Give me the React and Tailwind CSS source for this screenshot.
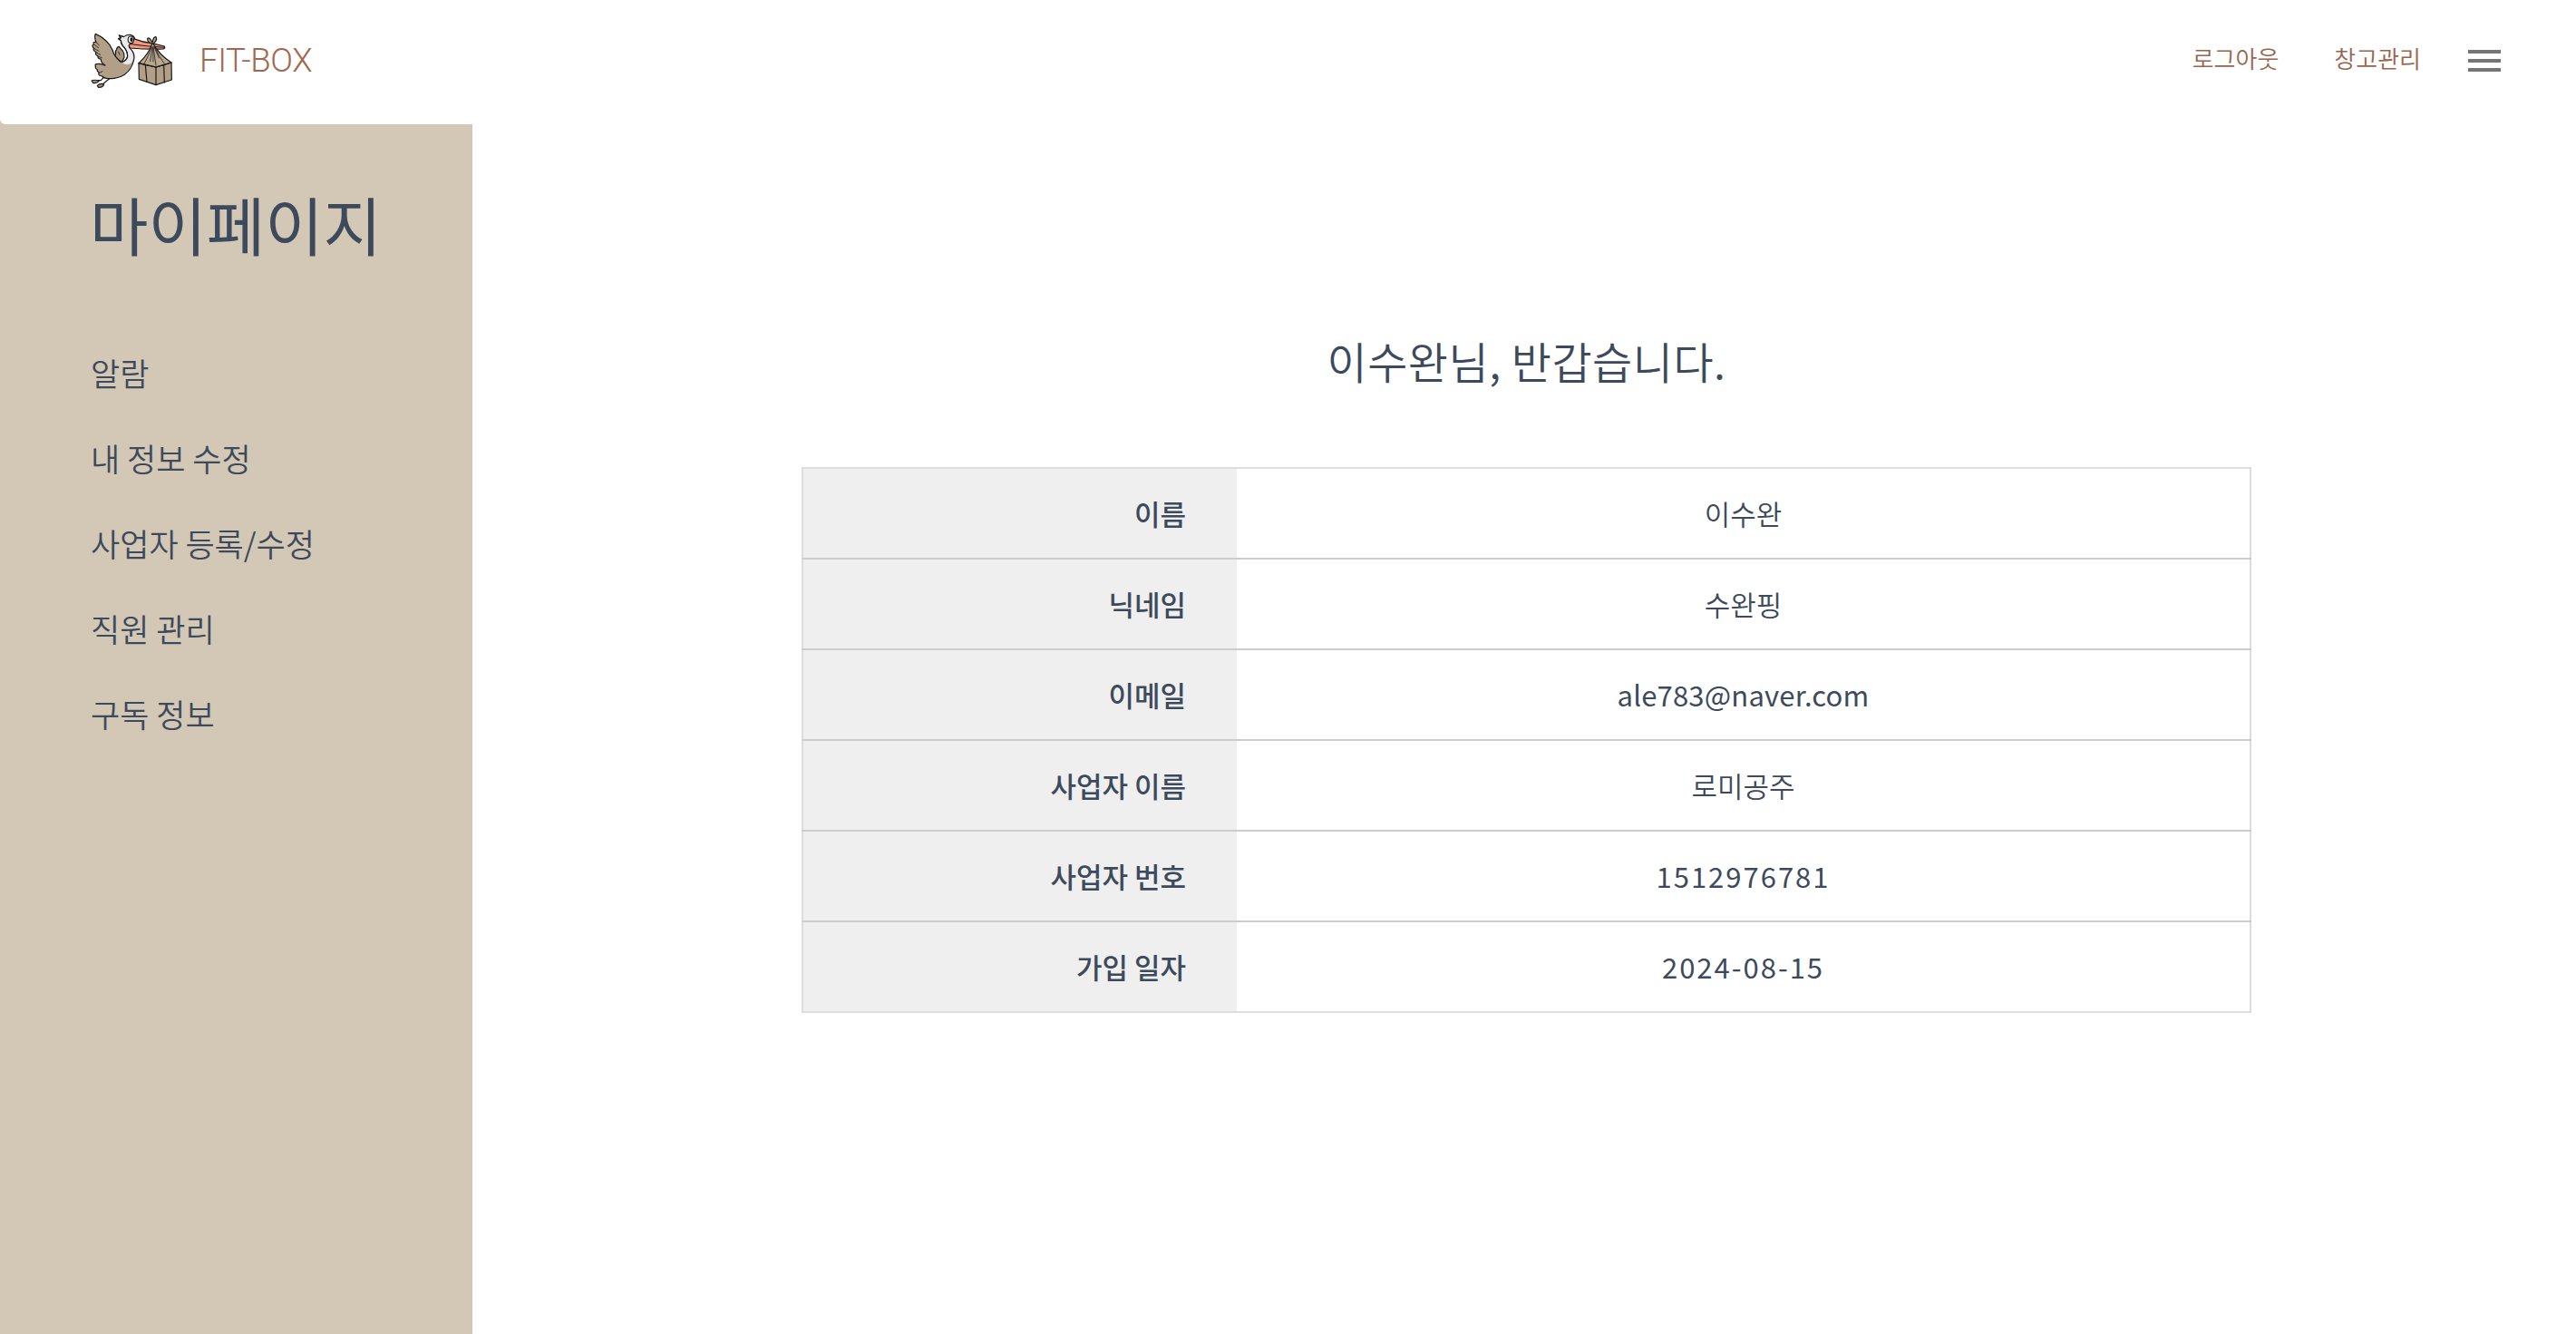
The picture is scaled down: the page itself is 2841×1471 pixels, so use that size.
const menu = ['알람', '내 정보 수정', '사업자 등록/수정', '직원 관리', '구독 정보'];

const rows = [
  { label: '이름', value: '이수완' },
  { label: '닉네임', value: '수완핑' },
  { label: '이메일', value: 'ale783@naver.com', latin: 'text-[31px] tracking-[0.2px]' },
  { label: '사업자 이름', value: '로미공주' },
  { label: '사업자 번호', value: '1512976781', latin: 'text-[31px] tracking-[2px]' },
  { label: '가입 일자', value: '2024-08-15', latin: 'text-[31px] tracking-[2px]' },
];

function StorkLogo() {
  return (
    <svg viewBox="60 45 276 192" className="h-16 w-[92px]" fill="none" stroke="#1c1a18" strokeWidth="3.6" strokeLinejoin="round" strokeLinecap="round">
      {/* feet */}
      <path d="M108 190L94 206H84M132 196L120 202L98 220" />
      <path d="M63 207Q74 202 87 208Q80 217 68 214Z" fill="#a8967f" />
      <path d="M82 223Q92 214 104 219Q100 230 86 229Z" fill="#a8967f" />
      {/* far wing */}
      <path d="M146 136Q138 126 143 117Q140 108 146 104Q146 95 154 94Q160 103 166 108Q172 116 171 130L162 148Z" fill="#a8967f" />
      {/* body and neck */}
      <path d="M154 57L170 62Q178 55 190 55Q206 57 206 72Q206 84 188 89Q184 96 194 104Q207 118 203 138Q196 170 172 187Q144 204 112 199Q104 199 98 192L88 189Q84 184 88 180Q80 176 82 170Q74 166 76 159Q72 151 84 151Q98 150 106 156L140 128L160 144Q176 144 182 128Q184 110 172 98Q160 86 160 74L152 68L160 66Z" fill="#b29f88" />
      <path d="M158 60L170 63Q180 56 190 57Q202 60 202 72Q202 82 186 88Q182 96 192 105Q202 116 201 134Q198 146 192 151Q178 157 163 148Q178 144 184 130Q184 110 173 97Q163 86 162 74L157 69L163 66Z" fill="#e7e9ed" stroke="none" />
      <path d="M163 146Q181 140 182 124Q181 110 172 98Q160 86 160 74L152 68L160 65L154 57L170 62" />
      {/* near wing */}
      <path d="M76 52Q96 60 111 75Q126 89 132 105Q137 125 158 144Q134 165 108 158Q92 146 94 136Q82 133 84 126Q73 119 78 113Q65 105 71 100Q61 90 70 87Q66 77 78 80Q71 62 76 52Z" fill="#b29f88" stroke="none" />
      <path d="M158 144Q137 125 132 105Q126 89 111 75Q96 60 76 52Q71 62 78 80Q66 77 70 87Q61 90 71 100Q65 105 78 113Q73 119 84 126Q82 133 94 136Q93 146 108 156" />
      <path d="M78 80L88 89M71 87L86 98M71 100L87 109M79 114L92 121M86 127L97 131M89 181L99 176M152 111L156 121" strokeWidth="2.4" />
      {/* bill */}
      <path d="M202 68Q232 80 262 83L304 93Q307 98 302 102Q246 104 191 99Q185 94 188 87L199 81Z" fill="#f39a7e" />
      <path d="M193 86Q240 93 304 97" strokeWidth="3" />
      <ellipse cx="193" cy="71" rx="9.5" ry="11" fill="#fff" strokeWidth="3.4" />
      <ellipse cx="195" cy="71" rx="4.8" ry="7" fill="#1c1a18" stroke="none" />
      {/* cloth sling and box */}
      <path d="M219 149L276 162L327 147L328 204L276 221L220 202Z" fill="#b29f88" />
      <path d="M263 85Q252 119 219 149L276 162L327 147Q288 122 267 85Z" fill="#b9a78f" />
      <path d="M263 85Q246 78 248 68Q254 60 264 81Q268 60 276 62Q282 73 266 85" fill="#b9a78f" />
      <path d="M219 149L276 162V221M276 162L327 147M241 154L246 211M302 155L304 213" />
      <path d="M261 96Q253 124 237 151M264 96L257 143M266 96L267 144M267 95L276 156M270 95L286 132M272 96Q284 124 304 151" strokeWidth="2.3" />
    </svg>
  );
}

function MenuIcon() {
  return (
    <svg viewBox="0 0 24 24" className="size-12" fill="#757575">
      <path d="M3 18h18v-2H3v2zm0-5h18v-2H3v2zm0-7v2h18V6H3z" />
    </svg>
  );
}

function Header() {
  return (
    <header className="flex h-[137px] items-start justify-between rounded-bl-[6px] bg-white pl-[100px] pr-[77px]">
      <div className="flex items-center pt-[35px]">
        <StorkLogo />
        <span className="ml-[28px] font-['Roboto',sans-serif] text-[36.5px] leading-[64px] font-light tracking-[-0.4px] text-[#a0694f]">FIT-BOX</span>
      </div>
      <nav className="flex items-start pt-[43px] text-[26px] leading-[48px] text-[#99654f] font-[350]">
        <a className="-mt-[3px] mr-[61px]">로그아웃</a>
        <a className="-mt-[3px] mr-[46px]">창고관리</a>
        <MenuIcon />
      </nav>
    </header>
  );
}

export default function App() {
  return (
    <div className="flex h-[1471px] w-full flex-col overflow-hidden bg-[linear-gradient(to_right,#d3c7b5_521px,#ffffff_521px)] font-['Noto_Sans_CJK_KR',sans-serif] text-[#3d4a5c]">
      <Header />
      <div className="flex flex-1">
        <aside className="w-[521px] shrink-0 pl-[100px]">
          <h1 className="mt-[60px] -ml-px text-[70px] leading-[100px] font-normal">마이페이지</h1>
          <ul className="mt-[67px] text-[35px] font-[350]">
            {menu.map((item) => (
              <li key={item} className="h-[94px] leading-[94px]">{item}</li>
            ))}
          </ul>
        </aside>
        <main className="flex flex-1 flex-col items-center pl-[5px]">
          <h2 className="mt-[220px] text-[48px] leading-[80px] font-[350] tracking-[0.5px]">이수완님, 반갑습니다.</h2>
          <div className="mt-[78px] w-[1599px] border-2 border-[#dddddd]">
            {rows.map((row) => (
              <div key={row.label} className="-mx-0.5 flex h-[100px] border-b-2 border-[#cccccc] last:h-[98px] last:border-b-0">
                <div className="w-[480px] border-l-2 border-[#dddddd] bg-[#efefef] pr-[56px] text-right text-[31px] leading-[98px] font-medium">{row.label}</div>
                <div className="flex-1 border-r-2 border-[#dddddd] bg-white text-center text-[31px] leading-[98px] font-[350]">
                  {row.latin ? <span className={'font-normal ' + row.latin}>{row.value}</span> : row.value}
                </div>
              </div>
            ))}
          </div>
        </main>
      </div>
    </div>
  );
}
